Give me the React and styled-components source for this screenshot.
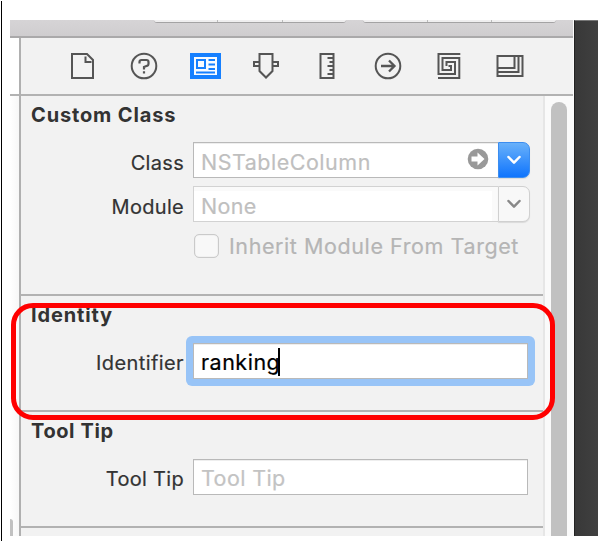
import React from "react";
import styled, { createGlobalStyle } from "styled-components";

const Global = createGlobalStyle`
  * { box-sizing: border-box; }
  body { margin: 0; background: #fff; overflow: hidden; }
  body, input { font-family: Inter, "Liberation Sans", sans-serif; }
`;

const Page = styled.div`
  position: relative;
  width: 609px;
  height: 541px;
  padding: 20px 0 0 10px;
  background: #fff;
`;

const EdgeRule = styled.div`
  position: absolute;
  left: 1px;
  top: 1px;
  bottom: 0;
  width: 1px;
  background: #000;
`;

const Window = styled.div`
  display: grid;
  grid-template-columns: 564px 24px;
  width: 588px;
  height: 516px;
  overflow: hidden;
`;

const Main = styled.div`
  display: grid;
  grid-template-rows: 18px 498px;
  border-right: 1px solid #fbfbfb;
`;

const Desktop = styled.div`
  background: linear-gradient(90deg, #383838, #404040);
  border-left: 1px solid #222;
  border-top: 1px solid #777;
`;

const TitleBar = styled.div`
  display: flex;
  gap: 17px;
  padding-left: 144px;
  background: linear-gradient(#d6d4d6, #cfcdcf);
  border-bottom: 2px solid #aaa9aa;
`;

const Capsule = styled.div`
  display: flex;
  justify-content: space-evenly;
  width: ${(p) => p.$width}px;
  height: 3px;
  background: #f0eff0;
  border-bottom: 1px solid #a4a3a4;
  border-radius: 0 0 8px 8px;
`;

const Tick = styled.i`
  width: 1px;
  height: 2px;
  background: #bbb;
`;

const Columns = styled.div`
  display: grid;
  grid-template-columns: 9px 1fr;
`;

const Editor = styled.div`
  display: grid;
  grid-template-rows: 56px 1fr;
  background: #fff;
`;

const EditorBody = styled.div`
  display: flex;
  align-items: flex-end;
  background: linear-gradient(90deg, #fff, #f7f7f7);
  border-top: 2px solid #b2b2b2;
`;

const EditorThumb = styled.div`
  width: 3px;
  height: 17px;
  background: #c1c1c1;
  border-radius: 0 5px 0 0;
`;

const Inspector = styled.div`
  display: grid;
  grid-template-rows: 56px 442px;
  background: #f2f2f2;
  border-left: 2px solid #b0b0b0;
`;

const IconBar = styled.div`
  display: flex;
  align-items: center;
  padding-left: 31px;
`;

const IconSlot = styled.div`
  display: flex;
  justify-content: center;
  flex: 0 0 61px;
`;

const Icon = styled.svg`
  display: block;
  width: 32px;
  height: 28px;
  fill: none;
  stroke: #555;
  stroke-width: 2;
`;

const Scroller = styled.div`
  display: grid;
  grid-template-columns: 522px 30px;
  border-top: 2px solid #b2b2b2;
`;

const Track = styled.div`
  background: #fafafa;
  border-left: 2px solid #e6e6e6;
  padding: 6px 0 0 6px;
`;

const Thumb = styled.div`
  width: 16px;
  height: 434px;
  background: #c1c1c1;
  border-radius: 8px 8px 0 0;
`;

const Section = styled.section`
  height: ${(p) => p.$height}px;
  border-bottom: 2px solid #b2b2b2;
`;

const Heading = styled.h2`
  margin: 0;
  padding: ${(p) => p.$top}px 0 0 10px;
  height: ${(p) => p.$height}px;
  font-size: 20px;
  line-height: 26px;
  font-weight: 700;
  letter-spacing: ${(p) => p.$spacing}px;
  color: #333;
  white-space: nowrap;
`;

const Row = styled.div`
  display: grid;
  grid-template-columns: 163px 337px;
  column-gap: 9px;
  height: ${(p) => p.$height}px;
  margin-bottom: ${(p) => p.$gap || 0}px;
`;

const Label = styled.label`
  padding-top: ${(p) => p.$drop}px;
  text-align: right;
  font-size: 20px;
  line-height: 30px;
  letter-spacing: ${(p) => p.$spacing}px;
  color: #333;
  -webkit-text-stroke: 0.2px #333;
  white-space: nowrap;
`;

const Combo = styled.div`
  display: flex;
`;

const Field = styled.div`
  display: flex;
  width: ${(p) => p.$width}px;
  padding: ${(p) => p.$drop}px 9px 0 7px;
  background: #fff;
  border: 1px solid ${(p) => (p.$soft ? "#d2d2d2" : "#b9b9b9")};
  border-right-width: ${(p) => (p.$joined ? 0 : 1)}px;
  box-shadow: ${(p) => (p.$soft ? "inset 0 4px #fafafa, inset -6px 0 #fafafa" : "inset 0 1px #eee")};
`;

const Halo = styled.div`
  display: flex;
  width: 349px;
  height: 50px;
  margin: -7px 0 0 -7px;
  padding: 7px;
  background: #98c4f7;
  border-radius: 6px;
`;

const Value = styled.span`
  flex: 1;
  font-size: 21.5px;
  line-height: 30px;
  letter-spacing: ${(p) => p.$spacing}px;
  color: ${(p) => p.$color || "#bfbfbf"};
  -webkit-text-stroke: 0.2px ${(p) => p.$color || "#bfbfbf"};
  white-space: nowrap;
`;

const Caret = styled.i`
  display: inline-block;
  width: 2px;
  height: 28px;
  margin-left: -2px;
  vertical-align: -6px;
  background: #000;
`;

const Jump = styled.svg`
  width: 22px;
  height: 22px;
  margin-top: 1px;
`;

const DropButton = styled.div`
  display: flex;
  justify-content: center;
  align-items: center;
  width: 32px;
  padding-bottom: 1px;
  background: ${(p) => (p.$active ? "linear-gradient(#69b1fa, #0f74fd)" : "#f8f8f8")};
  border: 1px solid ${(p) => (p.$active ? "#3b8df0" : "#d0d0d0")};
  border-radius: 0 7px 7px 0;
  box-shadow: 0 1px 1px rgba(0, 0, 0, 0.1);
`;

const CheckRow = styled.div`
  display: flex;
  align-items: center;
  gap: 10px;
  height: 26px;
  padding-left: 173px;
`;

const Box = styled.div`
  width: 25px;
  height: 24px;
  background: #f8f8f8;
  border: 1px solid #cacaca;
  border-radius: 5px;
  box-shadow: inset 0 0 1px #bbb;
`;

const Callout = styled.div`
  position: absolute;
  left: 11px;
  top: 303px;
  width: 544px;
  height: 117px;
  border: 5px solid #f00;
  border-radius: 22px;
`;

const Chevron = ({ color }) => (
  <svg width="16" height="12" fill="none" stroke={color} strokeWidth="2.5" strokeLinecap="round" strokeLinejoin="round">
    <path d="M2.5 3 8 8.7 13.5 3" />
  </svg>
);

const icons = [
  <path d="M5 2h15l6 6v18H5zM18.500 4.500v5.500h6" />,
  <>
    <circle cx="16" cy="14" r="12.300" />
    <path d="M11.500 11.500V10q0-2 2-2h5q2 0 2 2v2q0 1.500-1.500 1.800L16 15v2.500M16 19.200v2.300" strokeWidth="2.200" />
  </>,
  <>
    <path d="M1 1h31v26h-31z" fill="#1680ff" stroke="none" />
    <path d="M5 5h23v18H5z" fill="#f8fbff" stroke="none" />
    <path d="M8 8h8v8H8zM19.500 8h6.500M19.500 12.500h6.500M19.500 17h6.500M7 20.500h19" stroke="#1680ff" />
  </>,
  <path d="M9.500 2h13v17L16 25.500 9.500 19zM9.500 10H4v4h5.500M22.500 10H28v4h-5.500" />,
  <path d="M9.500 2h13v24h-13zM16.500 6h5M18.500 10h3M16.500 14h5M18.500 18h3M16.500 22h5" />,
  <>
    <circle cx="16" cy="14" r="12.300" />
    <path d="M9 14h13.500M17 8.500l5.500 5.500-5.500 5.500" strokeWidth="2.300" />
  </>,
  <path d="M27.300 2H5.500v20H22V10h-8.500v4M5 26h21.300V6H9.500v12H18v-4h-2.500" />,
  <path d="M3.500 4h25v20h-25zM3.500 20H24.500V4M3.500 16H20.500V4" />,
];

const InspectorIcons = () => (
  <IconBar>
    {icons.map((shape, i) => (
      <IconSlot key={i}>
        <Icon viewBox="0 0 32 28">{shape}</Icon>
      </IconSlot>
    ))}
  </IconBar>
);

export default function App() {
  return (
    <Page>
      <Global />
      <EdgeRule />
      <Window>
        <Main>
          <TitleBar>
            <Capsule $width={192}><Tick /><Tick /></Capsule>
            <Capsule $width={193}><Tick /><Tick /></Capsule>
          </TitleBar>
          <Columns>
            <Editor>
              <div />
              <EditorBody><EditorThumb /></EditorBody>
            </Editor>
            <Inspector>
              <InspectorIcons />
              <Scroller>
                <div>
                  <Section $height={200}>
                    <Heading $top={6} $height={46} $spacing={0.85}>Custom Class</Heading>
                    <Row $height={34} $gap={10}>
                      <Label $drop={6} $spacing={0.3}>Class</Label>
                      <Combo>
                        <Field $width={305} $drop={4} $joined>
                          <Value $spacing={0.5}>NSTableColumn</Value>
                          <Jump viewBox="0 0 22 22">
                            <circle cx="11" cy="11" r="10.300" fill="#999" />
                            <path d="M4.500 8.500h6V4.500l7 6.500-7 6.500v-4h-6z" fill="#fff" />
                          </Jump>
                        </Field>
                        <DropButton $active><Chevron color="#fff" /></DropButton>
                      </Combo>
                    </Row>
                    <Row $height={34} $gap={13}>
                      <Label $drop={6} $spacing={0.3}>Module</Label>
                      <Combo>
                        <Field $width={305} $drop={4} $soft $joined>
                          <Value $spacing={0.3}>None</Value>
                        </Field>
                        <DropButton><Chevron color="#888" /></DropButton>
                      </Combo>
                    </Row>
                    <CheckRow>
                      <Box />
                      <Value $spacing={0.58} $color="#b5b5b5">Inherit Module From Target</Value>
                    </CheckRow>
                  </Section>
                  <Section $height={116}>
                    <Heading $top={6} $height={47} $spacing={0.85}>Identity</Heading>
                    <Row $height={36}>
                      <Label $drop={5} $spacing={0.4}>Identifier</Label>
                      <Halo>
                        <Field $width={335} $drop={3}>
                          <Value $spacing={0.5} $color="#000">ranking<Caret /></Value>
                        </Field>
                      </Halo>
                    </Row>
                  </Section>
                  <Section $height={116}>
                    <Heading $top={6} $height={47} $spacing={0.6}>Tool Tip</Heading>
                    <Row $height={36}>
                      <Label $drop={5} $spacing={0.3}>Tool Tip</Label>
                      <Field $width={335} $drop={3}>
                        <Value $spacing={0.4} $color="#c3c3c3">Tool Tip</Value>
                      </Field>
                    </Row>
                  </Section>
                </div>
                <Track><Thumb /></Track>
              </Scroller>
            </Inspector>
          </Columns>
        </Main>
        <Desktop />
      </Window>
      <Callout />
    </Page>
  );
}
